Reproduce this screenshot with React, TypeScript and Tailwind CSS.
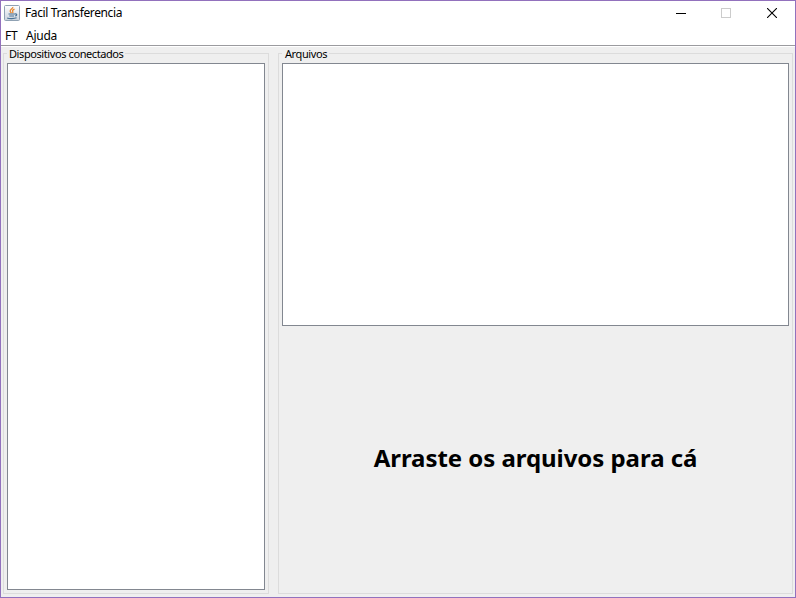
import type { ReactNode } from "react";

function JavaIcon() {
  return (
    <svg width="16" height="16" viewBox="0 0 16 16" fill="none">
      <defs>
        <linearGradient id="tile" x1="0" y1="0" x2="0" y2="1">
          <stop offset="0" stopColor="#ffffff" />
          <stop offset="1" stopColor="#c9d2dc" />
        </linearGradient>
      </defs>
      <rect x="0.5" y="0.5" width="15" height="15" rx="1" fill="url(#tile)" stroke="#8fa1b3" />
      <path d="M8.800 2c.5 1.800-3.200 2.400-2.600 4.300.2.800.9 1.200 1.200 2M10.500 4.200c-1.600.6-2.400 1.300-1.800 2.300.4.700.2 1.200-.2 1.600" stroke="#e8862d" strokeWidth="1.300" />
      <path d="M4.500 9h6.500M5.300 11h4.700M3.200 13c1.800.8 7.200.8 9.400-.2M11 9c2.400-.5 2.100 1.500.2 2" stroke="#4a7396" strokeWidth="1.200" />
    </svg>
  );
}

function TitleBar() {
  return (
    <header className="flex h-6 shrink-0 items-center bg-white pl-[3px]">
      <JavaIcon />
      <h1 className="ml-[5px] grow font-['Noto_Sans','Open_Sans',sans-serif] text-[12px] leading-6 tracking-[-0.37px] whitespace-nowrap">
        Facil Transferencia
      </h1>
      <div className="flex">
        <button aria-label="Minimizar" className="flex h-6 w-11 items-center justify-center">
          <svg width="10" height="11" shapeRendering="crispEdges"><path d="M0 5.500h10" stroke="#000" /></svg>
        </button>
        <button aria-label="Maximizar" className="flex h-6 w-[46px] items-center justify-center">
          <svg width="10" height="10" shapeRendering="crispEdges"><rect x=".5" y=".5" width="9" height="9" fill="none" stroke="#ccc" /></svg>
        </button>
        <button aria-label="Fechar" className="flex h-6 w-[46px] items-center justify-center">
          <svg width="10" height="10"><path d="M0 0l10 10M10 0L0 10" stroke="#000" strokeWidth="1.100" /></svg>
        </button>
      </div>
    </header>
  );
}

function Group({ title, className, titleClass, children }: { title: string; className: string; titleClass: string; children: ReactNode }) {
  return (
    <section className={`flex h-[541px] flex-col border border-[#dcdcdc] px-[3px] pb-[3px] ${className}`}>
      <h2 className={`-mt-[7px] mb-[2px] h-[14px] shrink-0 self-start bg-[#efefef] font-['Noto_Sans','Open_Sans',sans-serif] text-[11px] leading-[14px] whitespace-nowrap ${titleClass}`}>
        {title}
      </h2>
      {children}
    </section>
  );
}

export default function App() {
  return (
    <div className="flex h-[598px] w-[796px] flex-col overflow-hidden border border-[#9271bd] bg-[#efefef] text-black">
      <TitleBar />
      <nav className="flex h-[21px] shrink-0 gap-2 border-b border-[#9b9b9f] bg-white pl-1 font-['Noto_Sans','Open_Sans',sans-serif] text-[12px] leading-[22px]">
        <span className="w-[13px] tracking-[-0.3px]">FT</span>
        <span className="tracking-[-0.25px]">Ajuda</span>
      </nav>
      <main className="flex grow border-t border-white pt-[6px] pl-[2px]">
        <Group title="Dispositivos conectados" className="w-[266px]" titleClass="w-[118px] pl-[2px] tracking-[-0.41px]">
          <div className="grow border border-[#828790] bg-white" />
        </Group>
        <Group title="Arquivos" className="ml-[9px] w-[515px]" titleClass="w-[47px] pl-[3px] tracking-[-0.41px]">
          <div className="h-[263px] shrink-0 border border-[#828790] bg-white" />
          <div className="flex grow items-center justify-center">
            <p className="font-['Noto_Sans','Open_Sans',sans-serif] text-[24px] leading-8 font-bold whitespace-nowrap tracking-[-0.05px]">
              Arraste os arquivos para cá
            </p>
          </div>
        </Group>
      </main>
    </div>
  );
}
